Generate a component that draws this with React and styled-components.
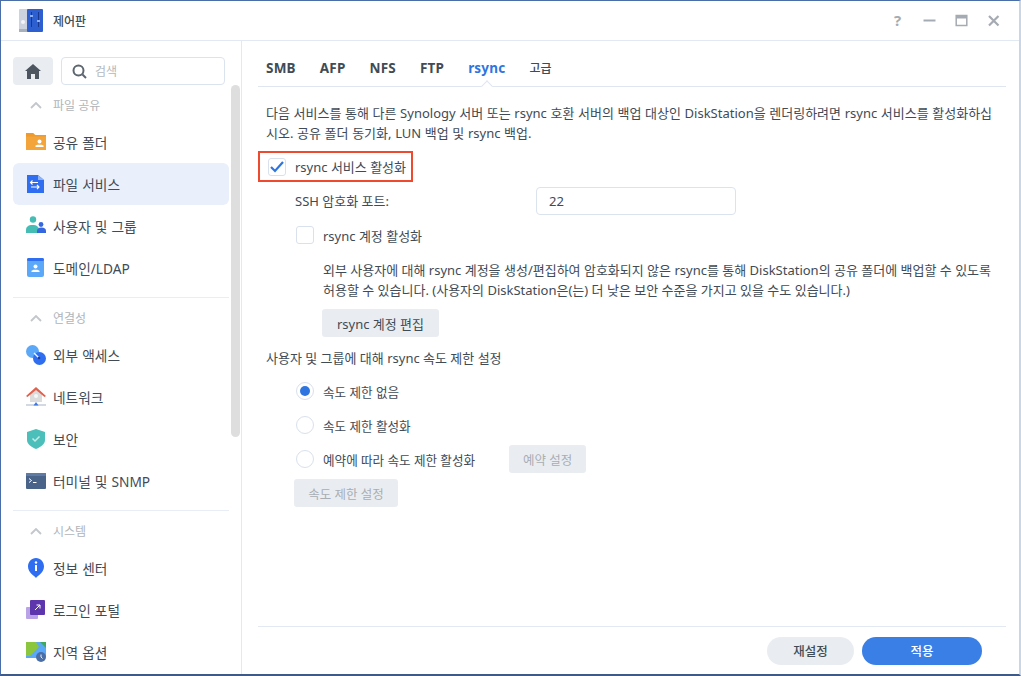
import styled, { createGlobalStyle } from "styled-components";

const Global = createGlobalStyle`
  html, body { margin: 0; padding: 0; background: #ffffff; }
  body { font-family: "Noto Sans", "Noto Sans CJK KR", sans-serif; color: #414b55; font-size: 13px; }
`;

const Win = styled.div`
  box-sizing: border-box;
  width: 1021px;
  height: 676px;
  display: flex;
  flex-direction: column;
  overflow: hidden;
  background: #fff;
  border-top: 1px solid #4a6fa8;
  border-left: 1px solid #4a6fa8;
  border-right: 2px solid #c9d6e6;
  border-bottom: 2px solid #3f5a86;
`;

const TitleBar = styled.div`
  height: 39px;
  flex: none;
  display: flex;
  align-items: center;
  padding: 0 18px 0 18px;
  border-bottom: 1px solid #e3e9f2;
`;

const AppName = styled.div`
  margin-left: 10px;
  font-size: 12px;
  font-weight: 500;
  color: #414b55;
`;

const WinButtons = styled.div`
  margin-left: auto;
  display: flex;
  align-items: center;
  gap: 17px;
`;

const WinIcon = styled.svg`
  width: 15px;
  height: 15px;
  display: block;
  fill: none;
  stroke: #a5abb2;
  stroke-width: 2;
`;

const Help = styled.span`
  width: 15px;
  text-align: center;
  font-size: 15px;
  font-weight: 700;
  line-height: 15px;
  color: #a5abb2;
`;

const Body = styled.div`
  flex: 1;
  display: flex;
  min-height: 0;
`;

const Side = styled.aside`
  position: relative;
  box-sizing: border-box;
  width: 241px;
  flex: none;
  padding: 16px 12px 0 12px;
  border-right: 1px solid #e3e9f2;
  overflow: hidden;
`;

const Scroll = styled.div`
  position: absolute;
  left: 230px;
  top: 44px;
  width: 9px;
  height: 352px;
  border-radius: 5px;
  background: #dedede;
`;

const SearchRow = styled.div`
  display: flex;
  gap: 8px;
  width: 212px;
`;

const HomeBtn = styled.div`
  width: 40px;
  height: 28px;
  border-radius: 4px;
  background: #e9edf1;
  display: flex;
  align-items: center;
  justify-content: center;
`;

const Search = styled.div`
  box-sizing: border-box;
  width: 164px;
  height: 28px;
  display: flex;
  align-items: center;
  gap: 8px;
  padding-left: 10px;
  border: 1px solid #dbe3ef;
  border-radius: 4px;
  color: #b4b9be;
  font-size: 12px;
`;

const Group = styled.div`
  width: 216px;
  padding-bottom: 8px;
  & + & {
    border-top: 1px solid #e9eef6;
  }
`;

const GroupHead = styled.div`
  height: 36px;
  padding: 4px 0 0 17px;
  display: flex;
  align-items: center;
  gap: 11px;
  color: #b0b5ba;
  font-size: 12px;
  box-sizing: border-box;
`;

const Item = styled.div`
  height: 42px;
  display: flex;
  align-items: center;
  gap: 7px;
  padding-left: 13px;
  border-radius: 6px;
  font-size: 13.7px;
  word-spacing: 0.5px;
  color: #414b55;
  background: ${(p) => (p.$on ? "#e9f0fb" : "transparent")};
`;

const ItemIcon = styled.svg`
  width: 20px;
  height: 20px;
  flex: none;
  display: block;
`;

const Main = styled.main`
  flex: 1;
  display: flex;
  flex-direction: column;
  padding: 0 13px 0 16px;
  min-width: 0;
`;

const Tabs = styled.div`
  position: relative;
  height: 46px;
  flex: none;
  box-sizing: border-box;
  display: flex;
  align-items: center;
  gap: 24px;
  padding: 8px 0 0 8px;
  border-bottom: 1px solid #dfe6f0;
`;

const Tab = styled.div`
  font-size: 13.5px;
  font-weight: 700;
  letter-spacing: 0.2px;
  color: ${(p) => (p.$on ? "#2f75e0" : "#414b55")};
`;

const TabKo = styled(Tab)`
  font-size: 12px;
  font-weight: 500;
  letter-spacing: 0;
`;

const TabCaret = styled.span`
  position: absolute;
  left: 225px;
  bottom: -4px;
  width: 7px;
  height: 7px;
  background: #fff;
  border-left: 1px solid #dfe6f0;
  border-top: 1px solid #dfe6f0;
  transform: rotate(45deg);
`;

const Content = styled.div`
  flex: 1;
  padding: 16px 0 0 8px;
`;

const Text = styled.p`
  margin: 0;
  line-height: 20px;
  font-size: 13px;
  color: #414b55;
`;

const Intro = styled(Text)`
  word-spacing: 0.25px;
`;

const Mark = styled.div`
  box-sizing: border-box;
  width: 155px;
  height: 31px;
  margin: 8px 0 0 -8px;
  padding-left: 8px;
  display: flex;
  align-items: center;
  gap: 9px;
  border: 2px solid #ee4a30;
  font-size: 13px;
`;

const Box = styled.span`
  box-sizing: border-box;
  width: 18px;
  height: 18px;
  flex: none;
  display: flex;
  align-items: center;
  justify-content: center;
  border: 1px solid #d9e1ec;
  border-radius: 3px;
  background: #fff;
`;

const Row = styled.div`
  display: flex;
  align-items: center;
  height: ${(p) => p.$h || 34}px;
  padding-left: ${(p) => p.$pad || 0}px;
  gap: ${(p) => p.$gap ?? 9}px;
`;

const SectionRow = styled(Row)`
  margin-top: 3px;
`;

const Label = styled.span`
  width: 241px;
  flex: none;
  font-size: 13px;
`;

const Input = styled.div`
  box-sizing: border-box;
  width: 200px;
  height: 28px;
  display: flex;
  align-items: center;
  padding-left: 12px;
  border: 1px solid #dbe3ef;
  border-radius: 4px;
  font-size: 13px;
`;

const Note = styled(Text)`
  margin: 9px 0 9px 57px;
  width: 690px;
`;

const Btn = styled.div`
  display: flex;
  align-items: center;
  justify-content: center;
  height: 28px;
  width: ${(p) => p.$w}px;
  border-radius: 3px;
  background: #e9edf1;
  font-size: ${(p) => p.$fs || 12.5}px;
  color: ${(p) => (p.$off ? "#a9aeb4" : "#414b55")};
  margin-left: ${(p) => p.$left || 0}px;
  margin-top: ${(p) => p.$top || 0}px;
`;

const Radio = styled.span`
  box-sizing: border-box;
  width: 18px;
  height: 18px;
  flex: none;
  border-radius: 50%;
  background: #fff;
  border: 1px solid #d9e1ec;
  display: flex;
  align-items: center;
  justify-content: center;
  &::after {
    content: "";
    display: ${(p) => (p.$on ? "block" : "none")};
    width: 10px;
    height: 10px;
    border-radius: 50%;
    background: #2f75e0;
  }
`;

const RadioText = styled.span`
  font-size: 12.6px;
`;

const Footer = styled.div`
  height: 47px;
  flex: none;
  display: flex;
  align-items: center;
  justify-content: flex-end;
  gap: 8px;
  padding-right: 24px;
  border-top: 1px solid #e3e9f2;
`;

const Pill = styled.div`
  width: ${(p) => p.$w}px;
  height: 28px;
  border-radius: 14px;
  display: flex;
  align-items: center;
  justify-content: center;
  font-size: 12.5px;
  font-weight: 500;
  background: ${(p) => (p.$primary ? "#397fe6" : "#e9edf1")};
  color: ${(p) => (p.$primary ? "#fff" : "#414b55")};
`;

const Chevron = () => (
  <svg width="12" height="7" viewBox="0 0 12 7" fill="none" stroke="#c3c7cb" strokeWidth="1.8">
    <path d="M1 6l5-5 5 5" />
  </svg>
);

const FolderIcon = () => (
  <ItemIcon viewBox="0 0 20 20">
    <path d="M0 1h7l2 2h11v15H0z" fill="#f3a53c" />
    <path d="M0 1h7l2 2h11v1.500H0z" fill="#ee9a2e" />
    <circle cx="13.500" cy="9.500" r="2" fill="#fff" />
    <path d="M9.500 15h8v-1.400l-2-.9h-4l-2 .9z" fill="#fff" />
  </ItemIcon>
);

const ServiceIcon = () => (
  <ItemIcon viewBox="0 0 20 20">
    <path d="M1 1h11l6 5v13H1z" fill="#2f6ef0" />
    <path d="M12 1l6 5h-6z" fill="#8fb3f7" />
    <path d="M6.500 6.500L4.500 8.500l2 2M4.500 8.500H12M11 11l2 2-2 2M5 13h8" fill="none" stroke="#fff" strokeWidth="1.100" />
  </ItemIcon>
);

const UsersIcon = () => (
  <ItemIcon viewBox="0 0 20 20">
    <circle cx="7" cy="3.500" r="3.200" fill="#45bdb5" />
    <path d="M0 17v-3c0-3 2-5 6.500-5s6.500 2 6.500 5v3z" fill="#45bdb5" />
    <circle cx="15" cy="8.500" r="2.400" fill="#3568e0" />
    <path d="M11 17v-2c0-2 1.500-3.500 4.500-3.500S20 13 20 15v2z" fill="#3568e0" />
  </ItemIcon>
);

const DomainIcon = () => (
  <ItemIcon viewBox="0 0 20 20">
    <rect x="1" y="0" width="17" height="19" rx="2" fill="#5aa8f7" />
    <rect x="1" y="0" width="17" height="3" rx="1.500" fill="#2f6ef0" />
    <circle cx="9.500" cy="8.500" r="2" fill="#fff" />
    <path d="M5.500 14h8v-1.300l-2-.9h-4l-2 .9z" fill="#fff" />
  </ItemIcon>
);

const AccessIcon = () => (
  <ItemIcon viewBox="0 0 20 20">
    <circle cx="6.500" cy="6.500" r="6.500" fill="#5aa8f7" />
    <circle cx="13.500" cy="13.500" r="6.500" fill="#2f6ef0" />
    <path d="M8 8l5 5" stroke="#fff" strokeWidth="1.300" />
    <circle cx="13" cy="13" r="1.300" fill="#1d3f9e" />
  </ItemIcon>
);

const NetworkIcon = () => (
  <ItemIcon viewBox="0 0 20 20">
    <path d="M4 7l6-5 6 5v8H4z" fill="#dcdcdc" />
    <path d="M0 9l10-9 10 9-1.500 1L10 3 1.500 10z" fill="#e2604c" />
    <circle cx="10" cy="9" r="2" fill="#f7f7f7" />
    <path d="M0 18h20" stroke="#b4c0d0" strokeWidth="1.200" />
    <path d="M7.500 18.500l2.500-3.500 2.500 3.500z" fill="#3b78e7" />
  </ItemIcon>
);

const ShieldIcon = () => (
  <ItemIcon viewBox="0 0 20 20">
    <path d="M10 0l9 3v8c0 4-4 7-9 9-5-2-9-5-9-9V3z" fill="#4dbfbb" />
    <path d="M6.500 9.500l2.500 2.500 4.500-4.500" fill="none" stroke="#c6ecea" strokeWidth="1.500" />
  </ItemIcon>
);

const TerminalIcon = () => (
  <ItemIcon viewBox="0 0 20 20">
    <rect x="0" y="2" width="20" height="16" rx="1" fill="#4a6489" />
    <rect x="0" y="2" width="20" height="3" rx="1" fill="#5f7ba3" />
    <path d="M3 7.500l2.500 2L3 11.500M7 11.500h3.500" fill="none" stroke="#fff" strokeWidth="1" />
  </ItemIcon>
);

const InfoIcon = () => (
  <ItemIcon viewBox="0 0 20 20">
    <path d="M10 20c-1-2-8-5-8-11.500C2 4 5.500 0 10 0s8 4 8 8.500C18 15 11 18 10 20z" fill="#2f6ef0" />
    <rect x="9" y="7" width="2" height="6" fill="#fff" />
    <circle cx="10" cy="4.500" r="1.200" fill="#fff" />
  </ItemIcon>
);

const PortalIcon = () => (
  <ItemIcon viewBox="0 0 20 20">
    <rect x="0" y="7" width="12" height="12" rx="1" fill="#b9a2e6" />
    <rect x="4" y="0" width="15" height="15" rx="1" fill="#5d35ad" />
    <path d="M9 10l5-5M10.500 5H14v3.500" fill="none" stroke="#fff" strokeWidth="1" />
  </ItemIcon>
);

const RegionIcon = () => (
  <ItemIcon viewBox="0 0 20 20">
    <path d="M0 0h20v15L15 16H0z" fill="#5aa8f7" />
    <path d="M0 0h10l3 5-9 9H0z" fill="#8cc63f" />
    <path d="M14 0h6v6z" fill="#3fa95c" />
    <circle cx="15" cy="15" r="5" fill="#4a6fa8" />
    <path d="M15 12.500V15l1.500 1.500" fill="none" stroke="#fff" strokeWidth="0.900" />
  </ItemIcon>
);

const groups = [
  {
    title: "파일 공유",
    items: [
      ["공유 폴더", FolderIcon],
      ["파일 서비스", ServiceIcon, true],
      ["사용자 및 그룹", UsersIcon],
      ["도메인/LDAP", DomainIcon],
    ],
  },
  {
    title: "연결성",
    items: [
      ["외부 액세스", AccessIcon],
      ["네트워크", NetworkIcon],
      ["보안", ShieldIcon],
      ["터미널 및 SNMP", TerminalIcon],
    ],
  },
  {
    title: "시스템",
    items: [
      ["정보 센터", InfoIcon],
      ["로그인 포털", PortalIcon],
      ["지역 옵션", RegionIcon],
    ],
  },
];

function Sidebar() {
  return (
    <Side>
      <SearchRow>
        <HomeBtn>
          <svg width="16" height="15" viewBox="0 0 16 15" fill="#4d5660">
            <path d="M8 0l8 7h-2v8h-4v-5H6v5H2V7H0z" />
          </svg>
        </HomeBtn>
        <Search>
          <svg width="15" height="15" viewBox="0 0 15 15" fill="none" stroke="#5d666f" strokeWidth="2">
            <circle cx="6.500" cy="6.500" r="5" />
            <path d="M10.500 10.500L14 14" />
          </svg>
          검색
        </Search>
      </SearchRow>
      {groups.map((g) => (
        <Group key={g.title}>
          <GroupHead>
            <Chevron />
            {g.title}
          </GroupHead>
          {g.items.map(([name, Icon, on]) => (
            <Item key={name} $on={on}>
              <Icon />
              {name}
            </Item>
          ))}
        </Group>
      ))}
      <Scroll />
    </Side>
  );
}

export default function App() {
  return (
    <Win>
      <Global />
      <TitleBar>
        <svg width="24" height="24" viewBox="0 0 24 24">
          <rect x="0" y="0" width="10" height="23" rx="1" fill="#ccd2de" />
          <rect x="0" y="20" width="10" height="3" fill="#a9b0bd" />
          <circle cx="4" cy="13" r="2" fill="#f2f4f8" />
          <rect x="8" y="0" width="16" height="23" rx="1" fill="#2d5fd0" />
          <path d="M12.500 3v15M19.500 3v15" stroke="#16388f" strokeWidth="1" />
          <rect x="11" y="6" width="3" height="2" fill="#8db0f2" />
          <rect x="18" y="11" width="3" height="2" fill="#8db0f2" />
        </svg>
        <AppName>제어판</AppName>
        <WinButtons>
          <Help>?</Help>
          <WinIcon viewBox="0 0 15 15">
            <path d="M1.500 7.500h12" />
          </WinIcon>
          <WinIcon viewBox="0 0 15 15">
            <rect x="2.200" y="2.500" width="10.600" height="10" strokeWidth="1.500" />
            <path d="M2 4h11" strokeWidth="3" />
          </WinIcon>
          <WinIcon viewBox="0 0 15 15">
            <path d="M3 3l9.500 9.500M12.500 3L3 12.500" strokeWidth="2.200" />
          </WinIcon>
        </WinButtons>
      </TitleBar>
      <Body>
        <Sidebar />
        <Main>
          <Tabs>
            <Tab>SMB</Tab>
            <Tab>AFP</Tab>
            <Tab>NFS</Tab>
            <Tab>FTP</Tab>
            <Tab $on>rsync</Tab>
            <TabKo>고급</TabKo>
            <TabCaret />
          </Tabs>
          <Content>
            <Intro>
              다음 서비스를 통해 다른 Synology 서버 또는 rsync 호환 서버의 백업 대상인 DiskStation을 렌더링하려면 rsync 서비스를 활성화하십
              <br />
              시오. 공유 폴더 동기화, LUN 백업 및 rsync 백업.
            </Intro>
            <Mark>
              <Box>
                <svg width="14" height="12" viewBox="0 0 14 12" fill="none" stroke="#2f75e0" strokeWidth="2.200">
                  <path d="M1 6l4 4 8-9" />
                </svg>
              </Box>
              rsync 서비스 활성화
            </Mark>
            <Row $pad={29} $gap={0} $h={37}>
              <Label>SSH 암호화 포트:</Label>
              <Input>22</Input>
            </Row>
            <Row $pad={30} $h={32}>
              <Box />
              <span>rsync 계정 활성화</span>
            </Row>
            <Note>
              외부 사용자에 대해 rsync 계정을 생성/편집하여 암호화되지 않은 rsync를 통해 DiskStation의 공유 폴더에 백업할 수 있도록
              <br />
              허용할 수 있습니다. (사용자의 DiskStation은(는) 더 낮은 보안 수준을 가지고 있을 수도 있습니다.)
            </Note>
            <Btn $w={117} $left={56} $fs={13}>rsync 계정 편집</Btn>
            <SectionRow>
              <span>사용자 및 그룹에 대해 rsync 속도 제한 설정</span>
            </SectionRow>
            <Row $pad={30}>
              <Radio $on />
              <RadioText>속도 제한 없음</RadioText>
            </Row>
            <Row $pad={30}>
              <Radio />
              <RadioText>속도 제한 활성화</RadioText>
            </Row>
            <Row $pad={30}>
              <Radio />
              <RadioText>예약에 따라 속도 제한 활성화</RadioText>
              <Btn $off $w={77} $left={25}>예약 설정</Btn>
            </Row>
            <Btn $off $w={104} $left={28} $top={3}>속도 제한 설정</Btn>
          </Content>
          <Footer>
            <Pill $w={87}>재설정</Pill>
            <Pill $primary $w={120}>적용</Pill>
          </Footer>
        </Main>
      </Body>
    </Win>
  );
}
